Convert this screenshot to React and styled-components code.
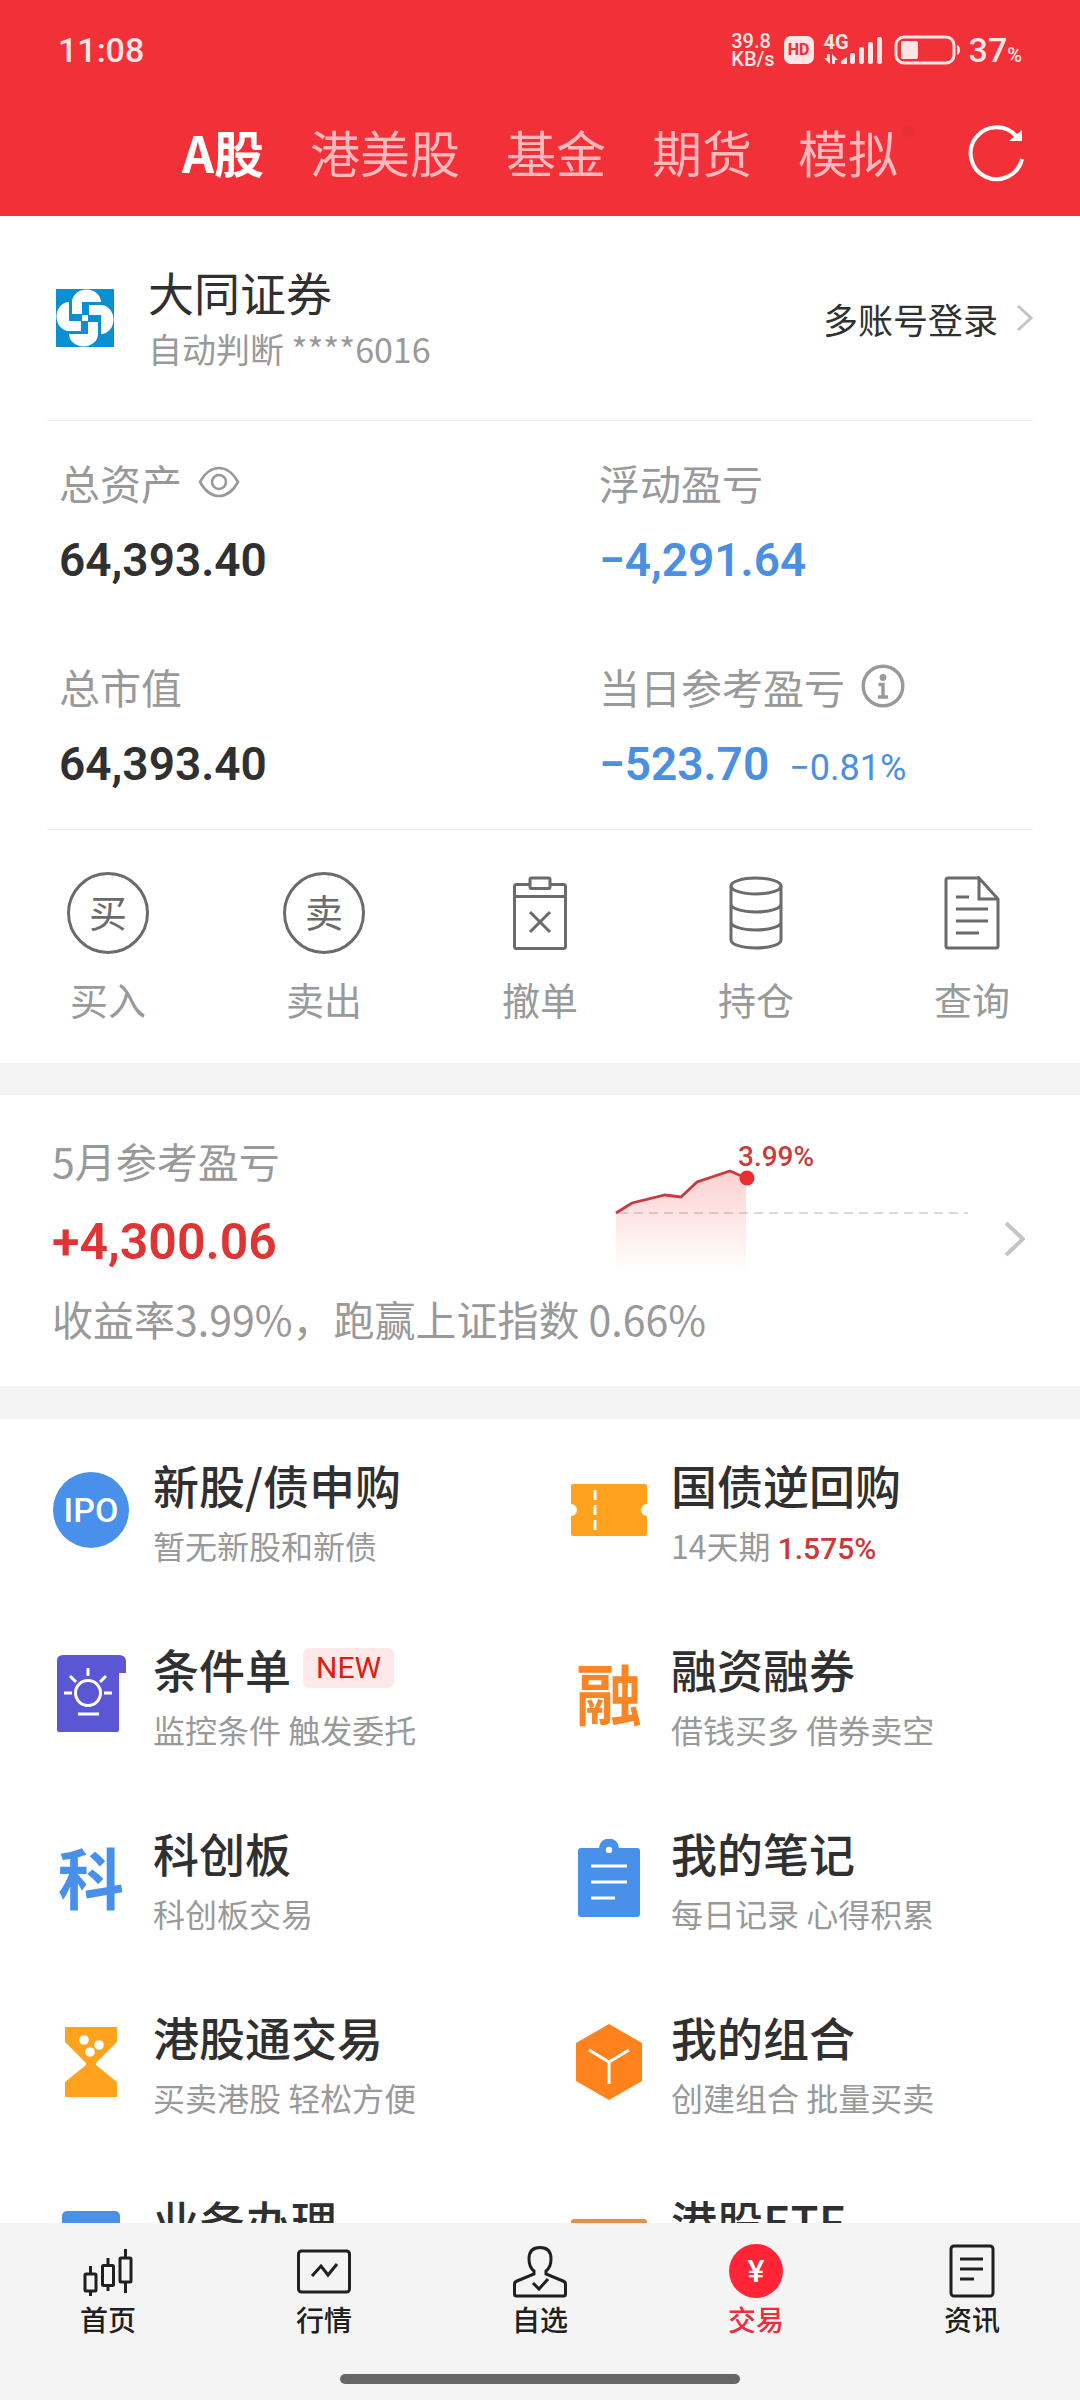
import React from "react";
import styled, { createGlobalStyle } from "styled-components";

const CJK = '"Noto Sans CJK SC", "Noto Sans", sans-serif';
const NUM = 'Roboto, "Noto Sans CJK SC", sans-serif';

const GlobalStyle = createGlobalStyle`
  *, *::before, *::after { box-sizing: border-box; }
  body { margin: 0; background: #fff; color: #303030; font-family: ${CJK}; }
  button { margin: 0; padding: 0; border: 0; background: none; color: inherit; font: inherit; cursor: pointer; }
  a { color: inherit; text-decoration: none; }
  h2, p, dl, dt, dd { margin: 0; font-weight: inherit; }
  svg { display: block; flex: none; }
`;

const Screen = styled.div`
  height: 100vh;
  display: flex;
  flex-direction: column;
`;

const Header = styled.header`
  flex: none;
  background: #f13038;
  color: #fff;
`;

const StatusBar = styled.div`
  height: 94px;
  padding: 6px 58px 0;
  display: flex;
  align-items: center;
  justify-content: space-between;
  color: #ffe6e6;
  font-family: ${NUM};
`;

const Clock = styled.time`
  font-size: 34px;
  font-weight: 500;
`;

const StatusIcons = styled.div`
  display: flex;
  align-items: center;
  gap: 9px;
`;

const NetSpeed = styled.span`
  font-size: 20px;
  line-height: 18px;
  font-weight: 500;
`;

const HdBadge = styled.span`
  width: 30px;
  height: 28px;
  border-radius: 7px;
  background: #ffe6e6;
  color: #f13038;
  font-size: 16px;
  line-height: 28px;
  font-weight: 800;
  text-align: center;
`;

const Signal = styled.span`
  width: 60px;
  height: 30px;
  position: relative;
  font-size: 20px;
  line-height: 18px;
  font-weight: 700;

  svg { position: absolute; inset: 0; }
  span { position: absolute; left: 1px; top: -2px; }
`;

const BatteryLevel = styled.span`
  font-size: 34px;
  font-weight: 500;

  small { font-size: 20px; }
`;

const TabBar = styled.nav`
  height: 122px;
  padding-bottom: 4px;
  display: grid;
  grid-template-columns: 1fr auto 1fr;
  align-items: center;
`;

const Tabs = styled.div`
  grid-column: 2;
  padding-bottom: 4px;
  display: flex;
  gap: 46px;
`;

const Tab = styled.button`
  position: relative;
  font-size: 50px;
  line-height: 64px;
  font-weight: ${(p) => (p.$active ? 700 : 400)};
  color: ${(p) => (p.$active ? "#fff" : "#ffb9bc")};
`;

const Dot = styled.i`
  position: absolute;
  right: -17px;
  top: 6px;
  width: 12px;
  height: 12px;
  border-radius: 50%;
  background: #e82e38;
`;

const Refresh = styled.button`
  justify-self: end;
  margin-right: 53px;
`;

const Main = styled.main`
  flex: 1;
  min-height: 0;
  overflow-y: auto;
  scrollbar-width: none;
`;

const Panel = styled.section`
  padding: 0 47px;
`;

const Account = styled.div`
  padding: 44px 0 44px 9px;
  display: flex;
  align-items: center;
  border-bottom: 1px solid #ececec;
`;

const AccountText = styled.div`
  flex: 1;
  margin-left: 34px;
`;

const BrokerName = styled.h2`
  font-size: 46px;
  line-height: 62px;
`;

const BrokerNote = styled.p`
  font-size: 34px;
  line-height: 54px;
  color: #999;
`;

const LoginLink = styled.a`
  display: flex;
  align-items: center;
  gap: 18px;
  font-size: 35px;
`;

const Summary = styled.dl`
  padding: 31px 0 33px 12px;
  display: grid;
  grid-template-columns: 540px 1fr;
  row-gap: 64px;
  border-bottom: 1px solid #ececec;
`;

const Metric = styled.div`
  display: flex;
  flex-direction: column;
  gap: 16px;
`;

const Label = styled.dt`
  display: flex;
  align-items: center;
  gap: 16px;
  font-size: 41px;
  line-height: 60px;
  color: #999;
`;

const Value = styled.dd`
  font-family: ${NUM};
  font-size: ${(p) => (p.$large ? 50 : 46)}px;
  line-height: 64px;
  font-weight: 600;
  color: ${(p) => p.$color || "#303030"};

  small {
    margin-left: 20px;
    font-size: 36px;
    line-height: 1;
    font-weight: 400;
  }
`;

const Actions = styled.nav`
  margin: 0 -47px;
  padding: 42px 0 36px;
  display: grid;
  grid-template-columns: repeat(5, 1fr);
`;

const Action = styled.button`
  display: flex;
  flex-direction: column;
  align-items: center;
  gap: 17px;
  font-size: 38px;
  line-height: 56px;
  color: #999;
`;

const ActionIcon = styled.span`
  width: 82px;
  height: 82px;
  display: flex;
  align-items: center;
  justify-content: center;
  color: #6b6b6b;
`;

const Ring = styled(ActionIcon)`
  padding-bottom: 4px;
  border: 3px solid #6b6b6b;
  border-radius: 50%;
`;

const Gap = styled.div`
  height: ${(p) => p.$h}px;
  background: #f4f4f4;
`;

const Month = styled.a`
  padding: 35px 55px 38px 52px;
  display: flex;
  align-items: center;
  gap: 28px;
`;

const MonthBody = styled.div`
  flex: 1;
  display: flex;
  flex-direction: column;
  gap: 14px;
`;

const MonthTop = styled.div`
  display: flex;
  justify-content: space-between;
`;

const MonthFigures = styled.dl`
  display: flex;
  flex-direction: column;
  gap: 20px;
`;

const MonthNote = styled.p`
  font-family: ${CJK};
  font-size: 41px;
  line-height: 60px;
  color: #999;
`;

const Services = styled.section`
  padding: 37px 15px 38px 53px;
  display: grid;
  grid-template-columns: 1fr 1fr;
  gap: 76px 24px;
`;

const Service = styled.a`
  display: flex;
  align-items: center;
  gap: 24px;
`;

const ServiceIcon = styled.span`
  width: 76px;
  height: 76px;
  flex: none;
  display: flex;
  align-items: center;
  justify-content: center;
`;

const IpoIcon = styled(ServiceIcon)`
  border-radius: 50%;
  background: #4890ea;
  color: #fff;
  font-family: ${NUM};
  font-size: 34px;
  font-weight: 500;
`;

const GlyphIcon = styled(ServiceIcon)`
  padding-bottom: 6px;
  color: ${(p) => p.$color};
  font-size: 66px;
  line-height: 70px;
  font-weight: 700;
`;

const ServiceText = styled.div`
  display: flex;
  flex-direction: column;
  gap: 14px;
`;

const ServiceTitle = styled.h2`
  display: flex;
  align-items: center;
  gap: 12px;
  font-size: 46px;
  line-height: 56px;
  font-weight: 500;
`;

const NewTag = styled.span`
  padding: 0 13px;
  border-radius: 6px;
  background: #fee8ea;
  color: #d8200f;
  font-family: ${NUM};
  font-size: 30px;
  line-height: 40px;
  font-weight: 400;
`;

const ServiceNote = styled.p`
  font-size: 32px;
  line-height: 38px;
  color: #999;

  b {
    font-family: ${NUM};
    font-size: 30px;
    line-height: 1;
    font-weight: 500;
    color: #cf3838;
  }
`;

const Footer = styled.footer`
  flex: none;
  padding: 21px 0 16px;
  display: flex;
  flex-direction: column;
  align-items: center;
  gap: 37px;
  background: #f4f4f4;
`;

const BottomNav = styled.nav`
  width: 100%;
  display: grid;
  grid-template-columns: repeat(5, 1fr);
`;

const NavItem = styled.a`
  display: flex;
  flex-direction: column;
  align-items: center;
  gap: 3px;
  font-size: 28px;
  line-height: 36px;
  font-weight: 500;
  color: ${(p) => (p.$active ? "#f02c3c" : "#202020")};
`;

const Coin = styled.span`
  width: 54px;
  height: 54px;
  border-radius: 50%;
  background: #ff2436;
  color: #fff;
  font-family: ${NUM};
  font-size: 32px;
  line-height: 54px;
  font-weight: 500;
  text-align: center;
`;

const HomeBar = styled.div`
  width: 37%;
  height: 10px;
  border-radius: 5px;
  background: #666;
`;

const Chevron = ({ w, h, stroke = 3 }) => (
  <svg width={w} height={h} viewBox={`0 0 ${w} ${h}`} fill="none" stroke="#c4c4c4" strokeWidth={stroke}>
    <path d={`M2 2L${w - 2} ${h / 2}L2 ${h - 2}`} />
  </svg>
);

const PETAL = "M-13 -4V-16A14.5 12.5 0 0 1 16 -16H-3V-4Z";
const BrokerLogo = () => (
  <svg width="58" height="58" viewBox="-29 -29 58 58" fill="#fff">
    <rect x="-29" y="-29" width="58" height="58" fill="#0a8fd0" />
    {[0, 90, 180, 270].map((a) => (
      <path key={a} d={PETAL} transform={`rotate(${a})`} />
    ))}
    <rect x="-3" y="-3" width="6" height="6" />
  </svg>
);

const EyeIcon = () => (
  <svg width="42" height="34" viewBox="0 0 42 34" fill="none" stroke="#999" strokeWidth="2.6">
    <path d="M2 17C7 8 13.500 3 21 3s14 5 19 14c-5 9-11.500 14-19 14S7 26 2 17z" />
    <circle cx="21" cy="17" r="7" />
  </svg>
);

const InfoIcon = () => (
  <svg width="44" height="44" viewBox="0 0 44 44" fill="none" stroke="#999" strokeWidth="3.400">
    <circle cx="22" cy="22" r="19.800" />
    <circle cx="22" cy="13.500" r="3.400" fill="#999" stroke="none" />
    <path d="M17.500 20.500H22V33M17 33H27" />
  </svg>
);

const line = { fill: "none", stroke: "#6b6b6b", strokeWidth: 3 };
const CancelIcon = () => (
  <svg width="54" height="74" viewBox="0 0 54 74" {...line}>
    <path d="M17 8.500H3.500Q1.500 8.500 1.500 10.500V70.500Q1.500 72.500 3.500 72.500H50.500Q52.500 72.500 52.500 70.500V10.500Q52.500 8.500 50.500 8.500H37" />
    <rect x="17" y="2" width="20" height="10.500" rx="1.500" />
    <path d="M1.500 20.500H52.500M17 36L37 56M37 36L17 56" />
  </svg>
);

const PositionIcon = () => (
  <svg width="54" height="74" viewBox="0 0 54 74" {...line}>
    <ellipse cx="27" cy="10" rx="25" ry="8" />
    <path d="M2 10V64C2 68.500 13 72 27 72S52 68.500 52 64V10M2 28C2 32.500 13 36 27 36S52 32.500 52 28M2 46C2 50.500 13 54 27 54S52 50.500 52 46" />
  </svg>
);

const QueryIcon = () => (
  <svg width="56" height="74" viewBox="0 0 56 74" {...line}>
    <path d="M35 2H4Q2 2 2 4V70Q2 72 4 72H52Q54 72 54 70V23L35 2V23H54" />
    <path d="M12 21H25M12 33H44M12 45H44M12 57H35" />
  </svg>
);

const TrendChart = () => (
  <svg width="369" height="144" viewBox="0 -3 369 144">
    <defs>
      <linearGradient id="fade" x1="0" y1="0" x2="0" y2="1">
        <stop offset="0" stopColor="#f03c3c" stopOpacity="0.24" />
        <stop offset="1" stopColor="#f03c3c" stopOpacity="0" />
      </linearGradient>
    </defs>
    <path d="M12 80H361" stroke="#d9d9d9" strokeWidth="2" strokeDasharray="9 6" />
    <path d="M9 80L25 70L58 62L74 64L90 49L123 38L139 45V139H9Z" fill="url(#fade)" />
    <path d="M9 80L25 70L58 62L74 64L90 49L123 38L139 45" fill="none" stroke="#cc3a3d" strokeWidth="2.800" />
    <circle cx="140" cy="45" r="7.500" fill="#ea2e2e" />
    <text x="131" y="33" fontFamily="Roboto, sans-serif" fontSize="28" fontWeight="500" fill="#c93c3c">3.99%</text>
  </svg>
);

const TicketIcon = () => (
  <svg width="76" height="52" viewBox="0 0 76 52">
    <path d="M2 0H74Q76 0 76 2V20A6 6 0 0 0 76 32V50Q76 52 74 52H2Q0 52 0 50V32A6 6 0 0 0 0 20V2Q0 0 2 0Z" fill="#ffa31f" />
    <path d="M24 6V46" stroke="#fff" strokeWidth="3" strokeDasharray="10 5" />
  </svg>
);

const BulbIcon = () => (
  <svg width="76" height="80" viewBox="0 0 76 80" fill="none" stroke="#fff" strokeWidth="3">
    <path d="M10 1H66Q73 1 73 8V19H66V76Q66 78 64 78H6Q4 78 4 76V7Q4 1 10 1Z" fill="#5b56d3" stroke="none" />
    <circle cx="35" cy="39" r="12.500" />
    <path d="M35 14V22M17 22L23 28M53 22L47 28M11 39H19M51 39H59M25 60H46" />
  </svg>
);

const NoteIcon = () => (
  <svg width="62" height="78" viewBox="0 0 62 78">
    <path d="M3 9H21A10 9.500 0 0 1 41 9H59Q62 9 62 12V75Q62 78 59 78H3Q0 78 0 75V12Q0 9 3 9Z" fill="#4890ea" />
    <circle cx="31" cy="11" r="3.200" fill="#fff" />
    <path d="M13 27H49M13 43H49M13 59H37" stroke="#fff" strokeWidth="3" />
  </svg>
);

const HourglassIcon = () => (
  <svg width="52" height="70" viewBox="0 0 52 70">
    <path d="M0 0H52V15L31 36V38L52 55V70H0V55L21 38V36L0 15Z" fill="#ffa31f" />
    <g fill="#fff"><circle cx="19" cy="13" r="4.800" /><circle cx="34" cy="18" r="4.800" /><circle cx="25" cy="25" r="4.800" /></g>
  </svg>
);

const CubeIcon = () => (
  <svg width="66" height="76" viewBox="0 0 66 76">
    <path d="M33 0L66 19V57L33 76L0 57V19Z" fill="#ff821c" />
    <path d="M13 26L33 38L53 26M33 38V60" fill="none" stroke="#fff" strokeWidth="3" />
  </svg>
);

const DeskIcon = () => (
  <svg width="58" height="70" viewBox="0 0 58 70">
    <rect width="58" height="70" rx="5" fill="#4890ea" />
  </svg>
);

const EtfIcon = () => (
  <svg width="76" height="54" viewBox="0 0 76 54">
    <rect width="76" height="54" rx="3" fill="#e0914a" />
  </svg>
);

const nav = { width: 56, height: 54, viewBox: "0 0 56 54", fill: "none", stroke: "#202020", strokeWidth: 3 };
const CandleIcon = () => (
  <svg {...nav}>
    <rect x="5" y="30" width="11" height="17" rx="1" />
    <rect x="22.500" y="21.500" width="11" height="20" rx="1" />
    <rect x="40" y="14" width="11" height="24" rx="1" />
    <path d="M10.500 22V30M10.500 47V52M28 14V21.500M28 41.500V47M45.500 5V14M45.500 38V49" />
  </svg>
);
const MarketIcon = () => (
  <svg {...nav}>
    <rect x="2.500" y="7" width="51" height="41" rx="3" />
    <path d="M16 32L25 22L32 31L41 20" />
  </svg>
);
const WatchIcon = () => (
  <svg {...nav}>
    <path d="M22 30V27C18 24 17 20 17 15C17 7 21.500 3.500 28 3.500S39 7 39 15C39 20 38 24 34 27V30L51 37Q53.500 38 53.500 40V50Q53.500 52 51.500 52H4.500Q2.500 52 2.500 50V40Q2.500 38 5 37Z" />
    <path d="M21 39L27 45L36 35" />
  </svg>
);
const NewsIcon = () => (
  <svg {...nav}>
    <rect x="7" y="2" width="42" height="50" rx="3" />
    <path d="M16 15H39M16 25H39M16 35H30" />
  </svg>
);

const TABS = ["A股", "港美股", "基金", "期货", "模拟"];

const ACTIONS = [
  { label: "买入", icon: <Ring>买</Ring> },
  { label: "卖出", icon: <Ring>卖</Ring> },
  { label: "撤单", icon: <ActionIcon><CancelIcon /></ActionIcon> },
  { label: "持仓", icon: <ActionIcon><PositionIcon /></ActionIcon> },
  { label: "查询", icon: <ActionIcon><QueryIcon /></ActionIcon> },
];

const SERVICES = [
  { title: "新股/债申购", note: "暂无新股和新债", icon: <IpoIcon>IPO</IpoIcon> },
  { title: "国债逆回购", note: <>14天期 <b>1.575%</b></>, icon: <ServiceIcon><TicketIcon /></ServiceIcon> },
  { title: "条件单", tag: "NEW", note: "监控条件 触发委托", icon: <ServiceIcon><BulbIcon /></ServiceIcon> },
  { title: "融资融券", note: "借钱买多 借券卖空", icon: <GlyphIcon $color="#fa8526">融</GlyphIcon> },
  { title: "科创板", note: "科创板交易", icon: <GlyphIcon $color="#4890ea">科</GlyphIcon> },
  { title: "我的笔记", note: "每日记录 心得积累", icon: <ServiceIcon><NoteIcon /></ServiceIcon> },
  { title: "港股通交易", note: "买卖港股 轻松方便", icon: <ServiceIcon><HourglassIcon /></ServiceIcon> },
  { title: "我的组合", note: "创建组合 批量买卖", icon: <ServiceIcon><CubeIcon /></ServiceIcon> },
  { title: "业务办理", icon: <ServiceIcon><DeskIcon /></ServiceIcon> },
  { title: "港股ETF", icon: <ServiceIcon><EtfIcon /></ServiceIcon> },
];

const NAV = [
  { label: "首页", icon: <CandleIcon /> },
  { label: "行情", icon: <MarketIcon /> },
  { label: "自选", icon: <WatchIcon /> },
  { label: "交易", icon: <Coin>¥</Coin>, active: true },
  { label: "资讯", icon: <NewsIcon /> },
];

export default function App() {
  return (
    <Screen>
      <GlobalStyle />
      <Header>
        <StatusBar>
          <Clock>11:08</Clock>
          <StatusIcons>
            <NetSpeed>39.8<br />KB/s</NetSpeed>
            <HdBadge>HD</HdBadge>
            <Signal>
              <span>4G</span>
              <svg width="60" height="30" viewBox="0 0 60 30" fill="#ffe6e6">
                <path d="M4 19H7V29L1 23H4ZM9 29V19L15 25H12V29ZM18 29V26L24 22V29Z" />
                <rect x="27" y="18" width="5" height="11" rx="2" />
                <rect x="36" y="12" width="5" height="17" rx="2" />
                <rect x="45" y="7" width="5" height="22" rx="2" />
                <rect x="54" y="2" width="5" height="27" rx="2" />
              </svg>
            </Signal>
            <svg width="68" height="30" viewBox="0 0 68 30">
              <rect x="4" y="2" width="58" height="26" rx="8" fill="none" stroke="#ffe6e6" strokeWidth="3" />
              <rect x="9" y="6" width="17" height="18" rx="2" fill="#ffe6e6" />
              <path d="M65 10Q68 11 68 15T65 20Z" fill="#ffe6e6" />
            </svg>
            <BatteryLevel>37<small>%</small></BatteryLevel>
          </StatusIcons>
        </StatusBar>
        <TabBar>
          <Tabs>
            {TABS.map((t, i) => (
              <Tab key={t} $active={i === 0}>{t}{i === 4 && <Dot />}</Tab>
            ))}
          </Tabs>
          <Refresh aria-label="刷新">
            <svg width="60" height="60" viewBox="0 0 60 60" fill="none" stroke="#fff" strokeWidth="4">
              <path d="M55 36A26 26 0 1 1 50 14" />
              <path d="M55 7V18H42Z" fill="#fff" stroke="none" />
            </svg>
          </Refresh>
        </TabBar>
      </Header>

      <Main>
        <Panel>
          <Account>
            <BrokerLogo />
            <AccountText>
              <BrokerName>大同证券</BrokerName>
              <BrokerNote>自动判断 ****6016</BrokerNote>
            </AccountText>
            <LoginLink href="#accounts">多账号登录<Chevron w={17} h={28} /></LoginLink>
          </Account>

          <Summary>
            <Metric>
              <Label>总资产 <EyeIcon /></Label>
              <Value>64,393.40</Value>
            </Metric>
            <Metric>
              <Label>浮动盈亏</Label>
              <Value $color="#4a90e2">−4,291.64</Value>
            </Metric>
            <Metric>
              <Label>总市值</Label>
              <Value>64,393.40</Value>
            </Metric>
            <Metric>
              <Label>当日参考盈亏 <InfoIcon /></Label>
              <Value $color="#4a90e2">−523.70<small>−0.81%</small></Value>
            </Metric>
          </Summary>

          <Actions>
            {ACTIONS.map((a) => (
              <Action key={a.label}>{a.icon}{a.label}</Action>
            ))}
          </Actions>
        </Panel>

        <Gap $h={32} />

        <Month href="#month">
          <MonthBody>
            <MonthTop>
              <MonthFigures>
                <Label>5月参考盈亏</Label>
                <Value $large $color="#e03434">+4,300.06</Value>
              </MonthFigures>
              <TrendChart />
            </MonthTop>
            <MonthNote>收益率3.99%，跑赢上证指数 0.66%</MonthNote>
          </MonthBody>
          <Chevron w={21} h={36} stroke={4} />
        </Month>

        <Gap $h={33} />

        <Services>
          {SERVICES.map((s) => (
            <Service key={s.title} href="#service">
              {s.icon}
              <ServiceText>
                <ServiceTitle>{s.title}{s.tag && <NewTag>{s.tag}</NewTag>}</ServiceTitle>
                <ServiceNote>{s.note || "\u00a0"}</ServiceNote>
              </ServiceText>
            </Service>
          ))}
        </Services>
      </Main>

      <Footer>
        <BottomNav>
          {NAV.map((n) => (
            <NavItem key={n.label} href="#tab" $active={n.active}>{n.icon}{n.label}</NavItem>
          ))}
        </BottomNav>
        <HomeBar />
      </Footer>
    </Screen>
  );
}
